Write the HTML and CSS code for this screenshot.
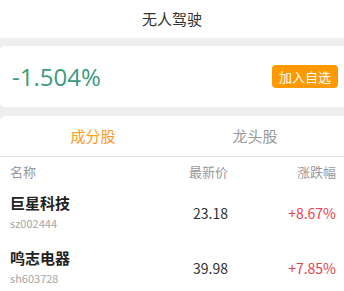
FILE: index.html
```html
<!DOCTYPE html>
<html lang="zh-CN">
<head>
    <meta charset="UTF-8">
    <meta name="viewport" content="width=device-width, initial-scale=1.0">
    <title>无人驾驶</title>
    <link rel="stylesheet" href="styles.css">
</head>
<body>
    <div class="title">无人驾驶</div>

    <div class="summary">
        <span class="rate">-1.504%</span>
        <button class="add-btn">加入自选</button>
    </div>

    <div class="panel">
        <div class="tabs">
            <div class="tab active">成分股</div>
            <div class="tab">龙头股</div>
        </div>

        <div class="row head">
            <div class="col-name">名称</div>
            <div class="col-price">最新价</div>
            <div class="col-change">涨跌幅</div>
        </div>

        <div class="row stock">
            <div class="col-name">
                <div class="name">巨星科技</div>
                <div class="code">sz002444</div>
            </div>
            <div class="col-price">23.18</div>
            <div class="col-change up">+8.67%</div>
        </div>

        <div class="row stock">
            <div class="col-name">
                <div class="name">鸣志电器</div>
                <div class="code">sh603728</div>
            </div>
            <div class="col-price">39.98</div>
            <div class="col-change up">+7.85%</div>
        </div>
    </div>
</body>
</html>
```

FILE: styles.css
```css
body {
    margin: 0;
    background-color: #eeeeee;
    font-family: "Noto Sans CJK SC", "Noto Sans", sans-serif;
    color: #333;
    overflow: hidden;
}

.title {
    height: 38px;
    line-height: 38px;
    text-align: center;
    font-size: 15px;
    color: #333;
    background-color: #fff;
}

.summary {
    display: flex;
    justify-content: space-between;
    align-items: center;
    height: 61px;
    margin-top: 8px;
    padding: 0 6px 0 12px;
    background-color: #fff;
    border-radius: 5px 0 0 5px;
}

.rate {
    font-size: 24px;
    color: #3d9a7c;
    font-family: "Open Sans", "Noto Sans CJK SC", sans-serif;
}

.add-btn {
    height: 23px;
    padding: 0 7px;
    border: none;
    border-radius: 4px;
    background-color: #ff9900;
    color: #fff;
    font-family: inherit;
    font-size: 13px;
}

.panel {
    margin-top: 9px;
    background-color: #fff;
    border-radius: 5px 0 0 0;
}

.tabs {
    display: flex;
    height: 40px;
    padding: 0 8px 0 12px;
    border-bottom: 1px solid #dde2ea;
}

.tab {
    flex: 1;
    line-height: 40px;
    text-align: center;
    font-size: 15px;
    color: #999;
}

.tab.active {
    color: #ff9a1f;
}

.row {
    display: flex;
    align-items: center;
    padding: 0 8px 0 10px;
}

.row.head {
    height: 29px;
    font-size: 13px;
    color: #999;
}

.row.stock {
    padding-top: 6px;
    padding-bottom: 7px;
}

.col-name {
    flex: 1;
}

.col-price {
    text-align: right;
}

.col-change {
    width: 108px;
    text-align: right;
}

.stock .col-price,
.stock .col-change {
    font-size: 14px;
}

.name {
    line-height: 21px;
    font-size: 15px;
    font-weight: bold;
    color: #222;
}

.code {
    line-height: 21px;
    font-size: 11px;
    color: #a5a5a5;
}

.up {
    color: #e8414f;
}
```
